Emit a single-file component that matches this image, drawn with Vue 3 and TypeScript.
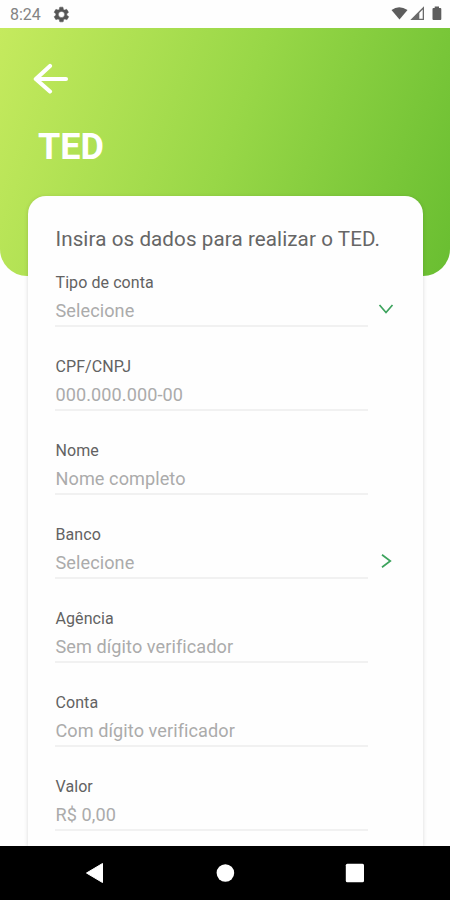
<script setup lang="ts">
interface Field {
  label: string
  placeholder: string
  icon?: 'down' | 'right'
}

const fields: Field[] = [
  { label: 'Tipo de conta', placeholder: 'Selecione', icon: 'down' },
  { label: 'CPF/CNPJ', placeholder: '000.000.000-00' },
  { label: 'Nome', placeholder: 'Nome completo' },
  { label: 'Banco', placeholder: 'Selecione', icon: 'right' },
  { label: 'Agência', placeholder: 'Sem dígito verificador' },
  { label: 'Conta', placeholder: 'Com dígito verificador' },
  { label: 'Valor', placeholder: 'R$ 0,00' },
]
</script>

<template>
  <div class="screen">
    <div class="status">
      <span class="time">8:24</span>
      <svg class="gear" width="17" height="17" viewBox="0 0 24 24">
        <path fill="#555" stroke="#555" stroke-width="0.700" fill-rule="evenodd" d="M19.4 13a7.500 7.500 0 0 0 0-2l2.200-1.700a.6.6 0 0 0 .1-.7l-2.100-3.600a.6.600 0 0 0-.7-.2l-2.600 1a7.600 7.600 0 0 0-1.700-1l-.4-2.700a.6.600 0 0 0-.5-.5H9.800a.6.600 0 0 0-.5.5l-.4 2.700a8 8 0 0 0-1.700 1l-2.600-1a.6.600 0 0 0-.7.200L1.800 8.600a.6.600 0 0 0 .1.700L4.100 11a7.500 7.500 0 0 0 0 2l-2.200 1.700a.6.600 0 0 0-.1.700l2.100 3.600c.2.300.4.300.7.200l2.600-1c.5.400 1.100.8 1.700 1l.4 2.700c0 .3.300.5.500.5h4.200c.3 0 .5-.2.500-.5l.4-2.700c.6-.3 1.200-.6 1.700-1l2.600 1c.3.100.5 0 .7-.2l2.100-3.600a.6.600 0 0 0-.1-.7zM12 7.600a4.400 4.400 0 1 1 0 8.800a4.400 4.400 0 0 1 0-8.800z" />
      </svg>
      <svg class="signals" width="52" height="16" viewBox="0 0 52 16">
        <path d="M0.500 4Q8 -1.500 16.500 4L8.500 13.500Z" fill="#5d5d5d" />
        <path d="M33 0.300V14H19.300ZM31.700 3.500L28.300 7V12.700H31.700Z" fill="#6a6a6a" fill-rule="evenodd" />
        <path d="M41.500 3Q41.500 2 42.500 2H43.700V0.500H48V2H49.300Q50.300 2 50.300 3V13Q50.300 14 49.300 14H42.500Q41.500 14 41.500 13Z" fill="#5d5d5d" />
      </svg>
    </div>
    <header class="hero">
      <svg class="back" width="36" height="32" viewBox="0 0 36 32">
        <path d="M33 16H3M17 3L2.800 16L17 28.500" fill="none" stroke="#fff" stroke-width="4.100" stroke-linecap="round" stroke-linejoin="round" />
      </svg>
      <h1>TED</h1>
    </header>
    <main class="card">
      <h2>Insira os dados para realizar o TED.</h2>
      <div v-for="f in fields" :key="f.label" class="field">
        <div class="entry">
          <label>{{ f.label }}</label>
          <span class="placeholder">{{ f.placeholder }}</span>
        </div>
        <svg v-if="f.icon" class="chevron" width="16" height="16" viewBox="0 0 16 16">
          <path :d="f.icon === 'down' ? 'M1.500 4L8 11.500L14.500 4' : 'M4 1.800L12.300 8L4 14.300'" fill="none" stroke="#3da35d" stroke-width="1.700" />
        </svg>
      </div>
    </main>
    <nav class="navbar">
      <svg width="20" height="22" viewBox="0 0 20 22"><path d="M1.500 11L17.500 1.500V20.500Z" fill="#fff" stroke="#fff" stroke-linejoin="round" /></svg>
      <svg width="20" height="22" viewBox="0 0 20 22"><circle cx="10.400" cy="11" r="8.800" fill="#fff" /></svg>
      <svg width="20" height="22" viewBox="0 0 20 22"><rect x="0.800" y="1.800" width="18.200" height="18.500" rx="1.500" fill="#fff" /></svg>
    </nav>
  </div>
</template>

<style>
body {
  margin: 0;
  background: #fefefe;
}
</style>

<style scoped>
.screen {
  width: 450px;
  height: 900px;
  display: flex;
  flex-direction: column;
  overflow: hidden;
  background: #fefefe;
  font-family: Roboto, 'Liberation Sans', sans-serif;
}
.status {
  flex: none;
  box-sizing: border-box;
  height: 28px;
  padding: 0 7px 0 10px;
  display: flex;
  align-items: center;
}
.time {
  width: 43px;
  padding-top: 2px;
  font-size: 16px;
  line-height: 20px;
  color: #838383;
}
.gear {
  margin-top: 1px;
}
.signals {
  margin-left: auto;
}
.hero {
  flex: none;
  box-sizing: border-box;
  height: 248px;
  padding: 35px 33px 0;
  border-radius: 0 0 27px 27px;
  background: linear-gradient(110deg, #c5ea5e 0%, #98d747 50%, #69be31 100%);
}
.back {
  display: block;
}
h1 {
  margin: 31px 0 0 5px;
  font-size: 36px;
  line-height: 42px;
  font-weight: 700;
  color: #fff;
}
.card {
  flex: 1;
  min-height: 0;
  overflow: hidden;
  position: relative;
  box-sizing: border-box;
  margin: -80px 27px 0 28px;
  padding: 30px 27px 0;
  border-radius: 18px 18px 0 0;
  background: #fefefe;
  box-shadow: 0 1px 4px rgba(0, 0, 0, 0.15);
}
h2 {
  margin: 0 0 17px;
  padding-left: 0.500px;
  font-size: 20.600px;
  line-height: 26px;
  font-weight: 400;
  letter-spacing: 0.090px;
  color: #666;
  white-space: nowrap;
}
.field {
  height: 58px;
  margin-bottom: 26px;
  display: flex;
  justify-content: space-between;
}
.entry {
  box-sizing: border-box;
  width: 313px;
  border-bottom: 2px solid #f1f1f1;
  display: flex;
  flex-direction: column;
}
label {
  margin-top: 4px;
  padding-left: 0.500px;
  font-size: 16px;
  line-height: 20px;
  letter-spacing: 0.080px;
  color: #626262;
}
.placeholder {
  margin-top: 6px;
  padding-left: 0.500px;
  font-size: 18.100px;
  line-height: 24px;
  letter-spacing: 0.080px;
  color: #ababab;
}
.chevron {
  margin: 32px 2px 0 0;
}
.navbar {
  flex: none;
  position: relative;
  box-sizing: border-box;
  height: 54px;
  padding: 0 85px;
  display: flex;
  align-items: center;
  justify-content: space-between;
  background: #000;
}
</style>
